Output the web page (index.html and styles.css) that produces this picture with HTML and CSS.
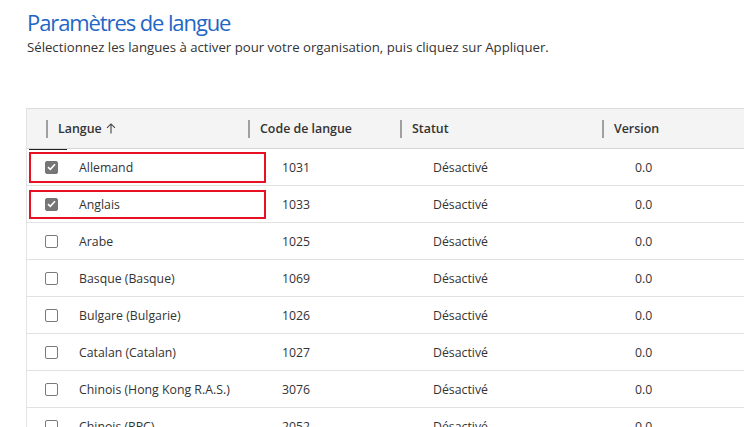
FILE: index.html
```html
<!DOCTYPE html>
<html lang="fr">
<head>
<meta charset="utf-8">
<title>Paramètres de langue</title>
<link rel="stylesheet" href="styles.css">
</head>
<body>
<div class="page">
  <header class="intro">
    <h1 class="title">Paramètres de langue</h1>
    <p class="subtitle">Sélectionnez les langues à activer pour votre organisation, puis cliquez sur Appliquer.</p>
  </header>

  <div class="grid">
    <div class="head">
      <div class="hcell hcheck"></div>
      <div class="hcell"><span class="sep"></span><span class="htext">Langue</span>
        <svg class="sort" width="10" height="11" viewBox="0 0 10 11"><path d="M5 10.5V1M1 4.8L5 0.9 9 4.8" fill="none" stroke="#444" stroke-width="1.1"/></svg>
      </div>
      <div class="hcell"><span class="sep"></span><span class="htext">Code de langue</span></div>
      <div class="hcell"><span class="sep"></span><span class="htext">Statut</span></div>
      <div class="hcell"><span class="sep"></span><span class="htext">Version</span></div>
    </div>

    <div class="row">
      <div class="hl hl1"></div>
      <div class="cell ccheck"><span class="box checked"><svg width="9" height="8" viewBox="0 0 9 8"><path d="M1 4.2L3.3 6.4 8 1.3" fill="none" stroke="#fff" stroke-width="1.6"/></svg></span></div>
      <div class="cell">Allemand</div>
      <div class="cell">1031</div>
      <div class="cell">Désactivé</div>
      <div class="cell">0.0</div>
    </div>
    <div class="row">
      <div class="hl hl2"></div>
      <div class="cell ccheck"><span class="box checked"><svg width="9" height="8" viewBox="0 0 9 8"><path d="M1 4.2L3.3 6.4 8 1.3" fill="none" stroke="#fff" stroke-width="1.6"/></svg></span></div>
      <div class="cell">Anglais</div>
      <div class="cell">1033</div>
      <div class="cell">Désactivé</div>
      <div class="cell">0.0</div>
    </div>
    <div class="row">
      <div class="cell ccheck"><span class="box"></span></div>
      <div class="cell">Arabe</div>
      <div class="cell">1025</div>
      <div class="cell">Désactivé</div>
      <div class="cell">0.0</div>
    </div>
    <div class="row">
      <div class="cell ccheck"><span class="box"></span></div>
      <div class="cell">Basque (Basque)</div>
      <div class="cell">1069</div>
      <div class="cell">Désactivé</div>
      <div class="cell">0.0</div>
    </div>
    <div class="row">
      <div class="cell ccheck"><span class="box"></span></div>
      <div class="cell">Bulgare (Bulgarie)</div>
      <div class="cell">1026</div>
      <div class="cell">Désactivé</div>
      <div class="cell">0.0</div>
    </div>
    <div class="row">
      <div class="cell ccheck"><span class="box"></span></div>
      <div class="cell">Catalan (Catalan)</div>
      <div class="cell">1027</div>
      <div class="cell">Désactivé</div>
      <div class="cell">0.0</div>
    </div>
    <div class="row">
      <div class="cell ccheck"><span class="box"></span></div>
      <div class="cell">Chinois (Hong Kong R.A.S.)</div>
      <div class="cell">3076</div>
      <div class="cell">Désactivé</div>
      <div class="cell">0.0</div>
    </div>
    <div class="row">
      <div class="cell ccheck"><span class="box"></span></div>
      <div class="cell">Chinois (RPC)</div>
      <div class="cell">2052</div>
      <div class="cell">Désactivé</div>
      <div class="cell">0.0</div>
    </div>
  </div>
</div>
</body>
</html>
```

FILE: styles.css
```css
html, body {
  margin: 0;
  padding: 0;
  background: #fff;
  overflow: hidden;
}
body {
  font-family: "Open Sans", "Noto Sans", sans-serif;
  color: #333;
}
.page {
  width: 744px;
  height: 427px;
  overflow: hidden;
}
.intro {
  padding: 6px 0 0 27px;
}
.title {
  margin: 0;
  font-size: 22px;
  line-height: 32px;
  font-weight: 400;
  color: #2366c5;
  letter-spacing: -1.1px;
}
.subtitle {
  margin: 0;
  font-size: 13.2px;
  line-height: 19px;
  color: #333;
}
.grid {
  margin: 51px 0 0 26px;
  border-top: 1px solid #dcdcdc;
  border-left: 1px solid #e3e3e3;
  width: 800px;
}
.head {
  position: relative;
  display: grid;
  grid-template-columns: 19px 202px 152px 202px 1fr;
  height: 39px;
  background: #f4f4f4;
  border-bottom: 1px solid #d6d6d6;
  font-size: 12.4px;
  font-weight: 600;
  color: #333;
}
.head::after {
  content: "";
  position: absolute;
  left: 2px;
  width: 38px;
  bottom: -2px;
  height: 1px;
  background: #222;
}
.hcell {
  display: flex;
  align-items: center;
}
.sep {
  width: 2px;
  height: 18px;
  background: #a0a0a0;
  margin-right: 10px;
}
.sort {
  margin-left: 4px;
}
.row {
  position: relative;
  display: grid;
  grid-template-columns: 52px 203px 151px 202px 1fr;
  height: 36px;
  border-bottom: 1px solid #e1e1e1;
  font-size: 12.3px;
  color: #333;
}
.cell {
  display: flex;
  align-items: center;
  white-space: nowrap;
}
.ccheck {
  padding-left: 18px;
}
.box {
  width: 11px;
  height: 11px;
  border: 1px solid #7a7a7a;
  border-radius: 2px;
  background: #fff;
  display: flex;
  align-items: center;
  justify-content: center;
}
.box.checked {
  background: #767676;
  border-color: #767676;
}
.hl {
  position: absolute;
  left: 2px;
  width: 233px;
  border: 2px solid #e81123;
  pointer-events: none;
}
.hl1 {
  top: 3px;
  height: 27px;
}
.hl2 {
  top: 4px;
  height: 25px;
}
```
